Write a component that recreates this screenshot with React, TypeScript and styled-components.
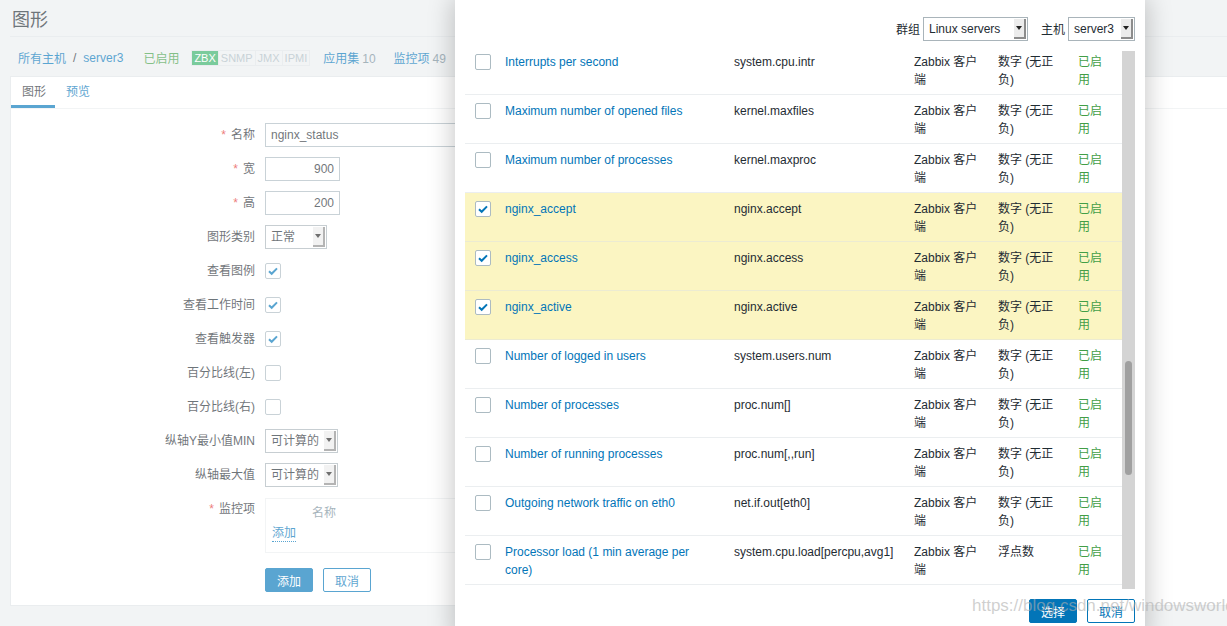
import React, { useLayoutEffect, useRef } from "react";
import styled, { createGlobalStyle } from "styled-components";

const GlobalStyle = createGlobalStyle`
  html, body { margin: 0; padding: 0; }
  body {
    background: #ebeef0;
    font-family: "Liberation Sans", "Noto Sans CJK SC", sans-serif;
    font-size: 12px;
    color: #1f2c33;
    overflow: hidden;
  }
  * { box-sizing: border-box; }
`;

const Page = styled.div`
  position: relative;
  width: 1227px;
  height: 626px;
  overflow: hidden;
  padding-left: 10px;
`;

const Header = styled.div`
  height: 37px;
  border-bottom: 1px solid #dfe4e7;
  display: flex;
  align-items: center;
`;

const Title = styled.h1`
  margin: 0;
  padding-left: 2px;
  font-size: 18px;
  font-weight: normal;
  color: #1f2c33;
`;

const Crumbs = styled.div`
  height: 39px;
  display: flex;
  align-items: center;
  padding: 2px 0 0 8px;
`;

const Link = styled.a`
  color: #0275b8;
  text-decoration: none;
`;

const Sep = styled.span`
  margin: 0 7px;
`;

const Green = styled.span<{ $ml?: number }>`
  color: #429e47;
  margin-left: ${(p) => p.$ml ?? 0}px;
`;

const NavItem = styled.span<{ $ml: number }>`
  margin-left: ${(p) => p.$ml}px;
`;

const Count = styled.span`
  color: #768d99;
  margin-left: 3px;
`;

const Badges = styled.span`
  display: inline-flex;
  margin-left: 12px;
  border: 1px solid #dfe4e7;
  height: 16px;
`;

const Badge = styled.span<{ $on?: boolean }>`
  padding: 0 2px;
  line-height: 14px;
  font-size: 11px;
  background: ${(p) => (p.$on ? "#34af67" : "transparent")};
  color: ${(p) => (p.$on ? "#fff" : "#acbbc2")};
  & + & {
    border-left: 1px solid #dfe4e7;
  }
`;

const Card = styled.div`
  height: 530px;
  background: #fff;
  border: 1px solid #dfe4e7;
  border-right: none;
`;

const Tabs = styled.div`
  display: flex;
  height: 32px;
  border-bottom: 1px solid #ebeef0;
`;

const Tab = styled.div<{ $active?: boolean }>`
  padding: 0 9px 0 11px;
  line-height: 31px;
  color: ${(p) => (p.$active ? "#1f2c33" : "#0275b8")};
  box-shadow: ${(p) => (p.$active ? "inset 0 -3px 0 #0275b8" : "none")};
`;

const Form = styled.div`
  padding-top: 9px;
`;

const Row = styled.div<{ $top?: boolean }>`
  display: grid;
  grid-template-columns: 244px 1fr;
  column-gap: 10px;
  align-items: ${(p) => (p.$top ? "start" : "center")};
  min-height: 34px;
  padding-top: ${(p) => (p.$top ? 6 : 0)}px;
`;

const Label = styled.div`
  text-align: right;
  line-height: 22px;
`;

const Star = styled.span`
  color: #e33734;
  margin-right: 5px;
`;

const TextInput = styled.input<{ $w: number; $right?: boolean }>`
  width: ${(p) => p.$w}px;
  height: 24px;
  border: 1px solid #acbbc2;
  padding: 0 5px;
  font: inherit;
  color: #1f2c33;
  text-align: ${(p) => (p.$right ? "right" : "left")};
  outline: none;
`;

const SelectBox = styled.div<{ $w: number }>`
  display: flex;
  width: ${(p) => p.$w}px;
  height: 24px;
  border: 1px solid #a9b4ba;
  background: #fff;
  padding: 1px;
`;

const SelectText = styled.span`
  flex: 1;
  padding-left: 4px;
  line-height: 20px;
  white-space: nowrap;
  overflow: hidden;
`;

const SelectArrow = styled.span`
  width: 12px;
  background: #ececec;
  border-right: 2px solid #8c8c8c;
  border-bottom: 2px solid #8c8c8c;
  display: flex;
  align-items: center;
  justify-content: center;
  &::after {
    content: "";
    border-left: 3px solid transparent;
    border-right: 3px solid transparent;
    border-top: 4px solid #222;
  }
`;

const Box = styled.span`
  display: inline-flex;
  width: 16px;
  height: 16px;
  border: 1px solid #acbbc2;
  border-radius: 2px;
  background: #fff;
  align-items: center;
  justify-content: center;
`;

const ItemsBox = styled.div`
  width: 453px;
  height: 55px;
  border: 1px solid #ebeef0;
  padding: 5px 0 0 6px;
`;

const ItemsHead = styled.div`
  padding-left: 40px;
  color: #768d99;
  line-height: 18px;
`;

const DottedLink = styled.a`
  display: inline-block;
  margin-top: 3px;
  color: #0275b8;
  border-bottom: 1px dotted #0275b8;
  line-height: 16px;
`;

const Buttons = styled.div<{ $pad?: string; $end?: boolean }>`
  display: flex;
  gap: 10px;
  padding: ${(p) => p.$pad ?? "0"};
  justify-content: ${(p) => (p.$end ? "flex-end" : "flex-start")};
`;

const Button = styled.button<{ $primary?: boolean }>`
  width: 48px;
  height: 24px;
  border: 1px solid #0275b8;
  border-radius: 2px;
  font: inherit;
  background: ${(p) => (p.$primary ? "#0275b8" : "#fff")};
  color: ${(p) => (p.$primary ? "#fff" : "#0275b8")};
  padding: 0;
`;

const Veil = styled.div`
  position: absolute;
  inset: 0;
  background: rgba(255, 255, 255, 0.35);
`;

const Modal = styled.div`
  position: absolute;
  left: 455px;
  top: 0;
  width: 690px;
  height: 640px;
  background: #fff;
  box-shadow: 0 0 24px 2px rgba(0, 0, 0, 0.22);
  display: flex;
  flex-direction: column;
  padding: 17px 10px 0;
`;

const Filter = styled.div`
  display: flex;
  justify-content: flex-end;
  align-items: center;
  height: 23px;
`;

const FilterLabel = styled.span<{ $ml?: number }>`
  margin: 0 3px 0 ${(p) => p.$ml ?? 0}px;
`;

const ListFrame = styled.div`
  display: flex;
  margin-top: 11px;
  height: 538px;
`;

const Viewport = styled.div`
  flex: 1;
  overflow: hidden;
`;

const Track = styled.div`
  width: 13px;
  background: #d4d4d4;
  padding: 0 3px;
`;

const Thumb = styled.div<{ $top: number; $h: number }>`
  margin-top: ${(p) => p.$top}px;
  height: ${(p) => p.$h}px;
  background: #a0a0a0;
  border-radius: 4px;
`;

const TableRow = styled.div<{ $sel?: boolean; $head?: boolean }>`
  display: grid;
  grid-template-columns: 30px 229px 180px 84px 80px 54px;
  height: ${(p) => (p.$head ? 30 : 49)}px;
  border-bottom: 1px solid ${(p) => (p.$sel ? "#ecebd2" : "#ebeef0")};
  background: ${(p) => (p.$sel ? "#fbf5c2" : "#fff")};
  color: ${(p) => (p.$head ? "#768d99" : "#1f2c33")};
`;

const Cell = styled.div<{ $c?: string }>`
  padding: 7px 10px 0;
  line-height: 18px;
  color: ${(p) => p.$c ?? "inherit"};
`;

const BoxCell = styled.div`
  padding: 8px 0 0 10px;
`;

const Watermark = styled.div`
  position: absolute;
  left: 972px;
  top: 596px;
  font-size: 17px;
  color: rgba(175, 175, 175, 0.6);
  pointer-events: none;
  white-space: nowrap;
`;

const Check = ({ on }: { on?: boolean }) => (
  <Box>
    {on && (
      <svg width="12" height="12" viewBox="0 0 12 12">
        <path d="M2 6.2l2.7 2.6L10 3.4" fill="none" stroke="#0275b8" strokeWidth="2" />
      </svg>
    )}
  </Box>
);

const Select = ({ w, text }: { w: number; text: string }) => (
  <SelectBox $w={w}>
    <SelectText>{text}</SelectText>
    <SelectArrow />
  </SelectBox>
);

type Item = { name: string; key: string; vtype?: string; checked?: boolean };

const U = "数字 (无正负)";

const before: Item[] = [
  "Agent ping", "Available memory", "Checksum of /etc/passwd", "Context switches per second",
  "CPU guest nice time", "CPU guest time", "CPU idle time", "CPU interrupt time", "CPU iowait time",
  "CPU nice time", "CPU softirq time", "CPU steal time", "CPU system time", "CPU user time",
  "Free disk space on /", "Free disk space on / (percentage)", "Free disk space on /boot",
  "Free disk space on /boot (percentage)", "Free inodes on / (percentage)",
  "Free inodes on /boot (percentage)", "Free swap space", "Free swap space in %", "Host boot time",
  "Host local time", "Host name", "Host name of zabbix_agentd running",
  "Incoming network traffic on eth0", "Incoming network traffic on lo", "Interrupts per minute",
].map((name) => ({ name, key: "agent.item", vtype: U }));

const visible: Item[] = [
  { name: "Interrupts per second", key: "system.cpu.intr", vtype: U },
  { name: "Maximum number of opened files", key: "kernel.maxfiles", vtype: U },
  { name: "Maximum number of processes", key: "kernel.maxproc", vtype: U },
  { name: "nginx_accept", key: "nginx.accept", vtype: U, checked: true },
  { name: "nginx_access", key: "nginx.access", vtype: U, checked: true },
  { name: "nginx_active", key: "nginx.active", vtype: U, checked: true },
  { name: "Number of logged in users", key: "system.users.num", vtype: U },
  { name: "Number of processes", key: "proc.num[]", vtype: U },
  { name: "Number of running processes", key: "proc.num[,,run]", vtype: U },
  { name: "Outgoing network traffic on eth0", key: "net.if.out[eth0]", vtype: U },
  { name: "Processor load (1 min average per core)", key: "system.cpu.load[percpu,avg1]", vtype: "浮点数" },
];

const after: Item[] = [
  "Processor load (15 min average per core)", "Processor load (5 min average per core)",
  "System information", "System uptime", "Total disk space on /", "Total disk space on /boot",
  "Total memory", "Total swap space", "Used disk space on /", "Used disk space on /boot",
  "Version of zabbix_agent(d) running",
].map((name) => ({ name, key: "agent.item", vtype: "浮点数" }));

const items = [...before, ...visible, ...after];

const VIEW = 538;
const HEAD = 30;
const ROW = 49;
const SCROLL = HEAD + ROW * before.length + 5;
const TOTAL = HEAD + ROW * items.length;

export default function App() {
  const viewport = useRef<HTMLDivElement>(null);

  useLayoutEffect(() => {
    if (viewport.current) viewport.current.scrollTop = SCROLL;
  }, []);

  const thumbH = Math.round((VIEW * VIEW) / TOTAL);
  const thumbTop = Math.round((SCROLL / TOTAL) * VIEW);

  return (
    <Page>
      <GlobalStyle />
      <Header>
        <Title>图形</Title>
      </Header>
      <Crumbs>
        <Link>所有主机</Link>
        <Sep>/</Sep>
        <Link>server3</Link>
        <Green $ml={20}>已启用</Green>
        <Badges>
          <Badge $on>ZBX</Badge>
          <Badge>SNMP</Badge>
          <Badge>JMX</Badge>
          <Badge>IPMI</Badge>
        </Badges>
        <NavItem $ml={13}>
          <Link>应用集</Link>
          <Count>10</Count>
        </NavItem>
        <NavItem $ml={18}>
          <Link>监控项</Link>
          <Count>49</Count>
        </NavItem>
      </Crumbs>
      <Card>
        <Tabs>
          <Tab $active>图形</Tab>
          <Tab>预览</Tab>
        </Tabs>
        <Form>
          <Row>
            <Label><Star>*</Star>名称</Label>
            <TextInput $w={453} defaultValue="nginx_status" readOnly />
          </Row>
          <Row>
            <Label><Star>*</Star>宽</Label>
            <TextInput $w={75} $right defaultValue="900" readOnly />
          </Row>
          <Row>
            <Label><Star>*</Star>高</Label>
            <TextInput $w={75} $right defaultValue="200" readOnly />
          </Row>
          <Row>
            <Label>图形类别</Label>
            <Select w={62} text="正常" />
          </Row>
          <Row>
            <Label>查看图例</Label>
            <Check on />
          </Row>
          <Row>
            <Label>查看工作时间</Label>
            <Check on />
          </Row>
          <Row>
            <Label>查看触发器</Label>
            <Check on />
          </Row>
          <Row>
            <Label>百分比线(左)</Label>
            <Check />
          </Row>
          <Row>
            <Label>百分比线(右)</Label>
            <Check />
          </Row>
          <Row>
            <Label>纵轴Y最小值MIN</Label>
            <Select w={73} text="可计算的" />
          </Row>
          <Row>
            <Label>纵轴最大值</Label>
            <Select w={73} text="可计算的" />
          </Row>
          <Row $top>
            <Label><Star>*</Star>监控项</Label>
            <ItemsBox>
              <ItemsHead>名称</ItemsHead>
              <DottedLink>添加</DottedLink>
            </ItemsBox>
          </Row>
          <Row $top>
            <span />
            <Buttons $pad="9px 0 0">
              <Button $primary>添加</Button>
              <Button>取消</Button>
            </Buttons>
          </Row>
        </Form>
      </Card>

      <Veil />

      <Modal>
        <Filter>
          <FilterLabel>群组</FilterLabel>
          <Select w={105} text="Linux servers" />
          <FilterLabel $ml={13}>主机</FilterLabel>
          <Select w={67} text="server3" />
        </Filter>
        <ListFrame>
          <Viewport ref={viewport}>
            <TableRow $head>
              <BoxCell><Check /></BoxCell>
              <Cell>名称</Cell>
              <Cell>键值</Cell>
              <Cell>类型</Cell>
              <Cell>信息类型</Cell>
              <Cell>状态</Cell>
            </TableRow>
            {items.map((it, i) => (
              <TableRow key={i} $sel={it.checked}>
                <BoxCell><Check on={it.checked} /></BoxCell>
                <Cell $c="#0275b8">{it.name}</Cell>
                <Cell>{it.key}</Cell>
                <Cell>Zabbix 客户端</Cell>
                <Cell>{it.vtype}</Cell>
                <Cell $c="#429e47">已启用</Cell>
              </TableRow>
            ))}
          </Viewport>
          <Track>
            <Thumb $top={thumbTop} $h={thumbH} />
          </Track>
        </ListFrame>
        <Buttons $pad="10px 0 0" $end>
          <Button $primary>选择</Button>
          <Button>取消</Button>
        </Buttons>
      </Modal>

      <Watermark>https://blog.csdn.net/windowsworld</Watermark>
    </Page>
  );
}
